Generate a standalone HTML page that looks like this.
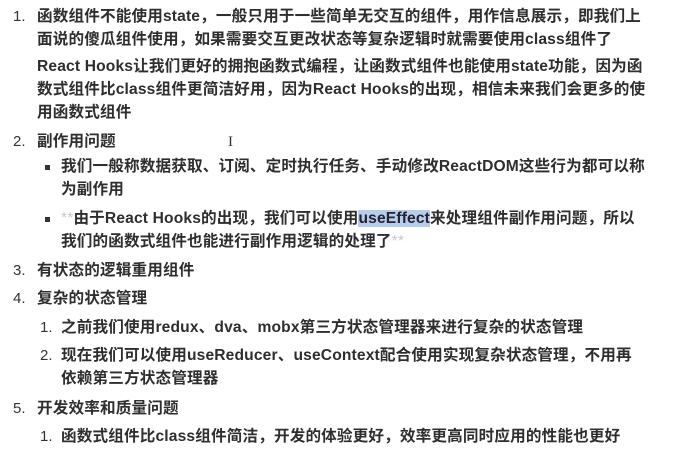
<!DOCTYPE html><html><head><meta charset="utf-8"><style>
body{margin:0;width:692px;height:455px;background:#fff;overflow:hidden;position:relative;font-family:"Liberation Sans","Noto Sans CJK SC",sans-serif;color:#2e2e2e}
.l{position:absolute;white-space:nowrap;font-size:15.6px;line-height:22px;font-weight:bold;letter-spacing:0.15px}
.n{position:absolute;font-size:15px;line-height:22px;color:#333}
.b{position:absolute;width:5px;height:5px;background:#333}
.g{color:#c8c8c8;font-weight:normal}
.h{background:#b8cdea;color:#223}
</style></head><body>
<div class="n" style="left:13px;top:6px">1.</div>
<div class="l" style="left:37px;top:6px">函数组件不能使用state，一般只用于一些简单无交互的组件，用作信息展示，即我们上</div>
<div class="l" style="left:37px;top:29px">面说的傻瓜组件使用，如果需要交互更改状态等复杂逻辑时就需要使用class组件了</div>
<div class="l" style="left:37px;top:56px">React Hooks让我们更好的拥抱函数式编程，让函数式组件也能使用state功能，因为函</div>
<div class="l" style="left:37px;top:79px">数式组件比class组件更简洁好用，因为React Hooks的出现，相信未来我们会更多的使</div>
<div class="l" style="left:37px;top:102px">用函数式组件</div>
<div class="n" style="left:13px;top:131px">2.</div>
<div class="l" style="left:37px;top:131px">副作用问题</div>
<div class="n" style="left:228px;top:131px;font-size:15px;font-family:'Liberation Serif',serif">I</div>
<div class="b" style="left:45px;top:165px"></div>
<div class="l" style="left:61px;top:156px">我们一般称数据获取、订阅、定时执行任务、手动修改ReactDOM这些行为都可以称</div>
<div class="l" style="left:61px;top:179px">为副作用</div>
<div class="b" style="left:45px;top:217px"></div>
<div class="l" style="left:61px;top:208px"><span class="g">**</span>由于React Hooks的出现，我们可以使用<span class="h">useEffect</span>来处理组件副作用问题，所以</div>
<div class="l" style="left:61px;top:231px">我们的函数式组件也能进行副作用逻辑的处理了<span class="g">**</span></div>
<div class="n" style="left:13px;top:260px">3.</div>
<div class="l" style="left:37px;top:260px">有状态的逻辑重用组件</div>
<div class="n" style="left:13px;top:288px">4.</div>
<div class="l" style="left:37px;top:288px">复杂的状态管理</div>
<div class="n" style="left:40px;top:317px">1.</div>
<div class="l" style="left:61px;top:317px">之前我们使用redux、dva、mobx第三方状态管理器来进行复杂的状态管理</div>
<div class="n" style="left:40px;top:345px">2.</div>
<div class="l" style="left:61px;top:345px">现在我们可以使用useReducer、useContext配合使用实现复杂状态管理，不用再</div>
<div class="l" style="left:61px;top:368px">依赖第三方状态管理器</div>
<div class="n" style="left:13px;top:398px">5.</div>
<div class="l" style="left:37px;top:398px">开发效率和质量问题</div>
<div class="n" style="left:40px;top:426px">1.</div>
<div class="l" style="left:61px;top:426px">函数式组件比class组件简洁，开发的体验更好，效率更高同时应用的性能也更好</div>
</body></html>
